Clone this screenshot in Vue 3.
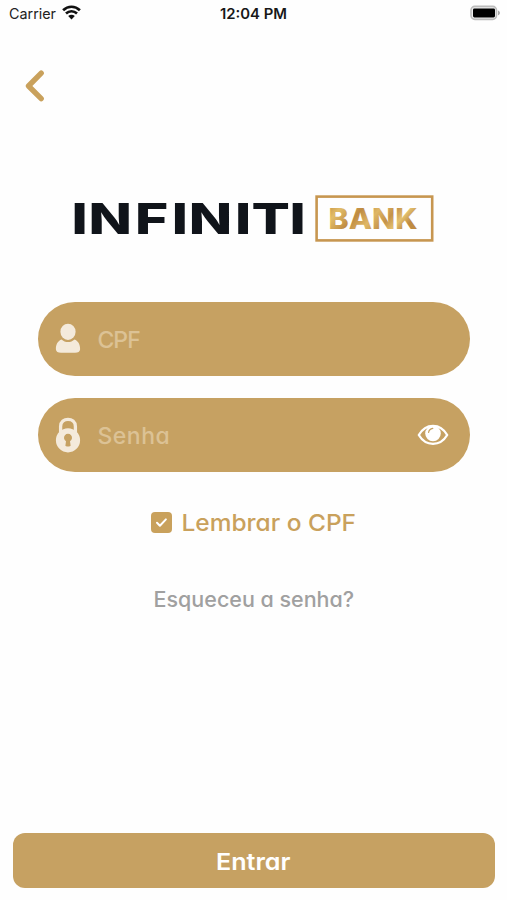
<script setup>
import { ref } from 'vue'

const cpf = ref('')
const password = ref('')
const showPassword = ref(false)
const remember = ref(true)
</script>

<template>
  <main class="screen">
    <header class="status">
      <div class="carrier">
        <svg class="carrier-name" width="48" height="20" viewBox="0 0 48 20"><text x="0" y="14.2" textLength="47" lengthAdjust="spacingAndGlyphs">Carrier</text></svg>
        <svg class="wifi" width="19" height="15" viewBox="0 0 19 15">
          <path d="M1.1 5.2C6 .6 13 .6 17.9 5.2M4 8.4c3.2-2.9 7.8-2.9 11 0" />
          <path class="wifi-dot" d="M6.2 10.9c2-1.7 4.6-1.7 6.6 0L9.5 14.4z" />
        </svg>
      </div>
      <svg class="time" width="68" height="20" viewBox="0 0 68 20"><text x="0" y="14.2" textLength="67" lengthAdjust="spacingAndGlyphs">12:04 PM</text></svg>
      <svg class="battery" width="32" height="16" viewBox="0 0 32 16">
        <rect x="2" y="1.4" width="25.5" height="13" rx="3.8" fill="#eee" stroke="#bcbcbc" stroke-width="1.6" />
        <rect x="4" y="3.4" width="22" height="9" rx="1.4" fill="#000" />
        <path d="M29 5.4c2.6.8 2.6 4 0 4.8z" fill="#aaa" />
      </svg>
    </header>

    <button class="back" aria-label="Voltar">
      <svg width="20" height="32" viewBox="0 0 20 32"><path d="M16.2 3.2 3.5 16l12.7 12.7" /></svg>
    </button>

    <div class="logo">
      <svg class="wordmark" width="232" height="48" viewBox="0 0 232 48">
        <text transform="scale(1.33 1)" x="-1.2 11.6 46.6 74.2 87.1 121.9 134.2 162.8" y="39.1">INFINITI</text>
      </svg>
      <svg class="bank" width="119" height="48" viewBox="0 0 119 48">
        <defs>
          <linearGradient id="gold" x1="0" y1="0" x2="1" y2=".35">
            <stop offset="0" stop-color="#c08a3e" />
            <stop offset=".18" stop-color="#e2bd69" />
            <stop offset=".4" stop-color="#bf8b42" />
            <stop offset=".58" stop-color="#dfb765" />
            <stop offset=".75" stop-color="#c4924a" />
            <stop offset=".88" stop-color="#e4c170" />
            <stop offset="1" stop-color="#bf8b42" />
          </linearGradient>
        </defs>
        <rect x="1.6" y="1.6" width="115.6" height="43.8" fill="none" stroke="#c79650" stroke-width="2.6" />
        <text x="13.5" y="34.4" textLength="89" lengthAdjust="spacingAndGlyphs" fill="url(#gold)">BANK</text>
      </svg>
    </div>

    <form class="form" @submit.prevent>
      <label class="field">
        <svg class="icon" width="26" height="38" viewBox="0 0 26 38">
          <ellipse cx="13" cy="11.8" rx="7.6" ry="8.1" />
          <path d="M6.5 19.5c3.5 3.4 9.5 3.4 13 0 3.6 1.2 5.8 5.2 5.6 9.8 0 2.5-2.2 3.4-5 3.4H6c-2.9 0-5.1-.9-5.1-3.4-.2-4.6 2-8.6 5.6-9.8z" />
        </svg>
        <input v-model="cpf" class="cpf" placeholder="CPF" />
      </label>
      <label class="field">
        <svg class="icon" width="26" height="38" viewBox="0 0 26 38">
          <path d="M5.6 17v-6.5c0-9.6 14.8-9.6 14.8 0V17" fill="none" stroke="#f4eadb" stroke-width="3.3" />
          <path fill-rule="evenodd" d="M13 12.2a12.1 12.1 0 1 0 0 24.2 12.1 12.1 0 0 0 0-24.2zM11 25.3a4 4 0 1 1 4 0l.6 4.3c.2 1.3-5.4 1.3-5.2 0z" />
        </svg>
        <input v-model="password" class="senha" :type="showPassword ? 'text' : 'password'" placeholder="Senha" />
        <button type="button" class="eye" aria-label="Mostrar senha" @click="showPassword = !showPassword">
          <svg width="32" height="22" viewBox="0 0 32 22">
            <path d="M1.8 11C8.8-1.2 23.2-1.2 30.2 11 23.2 22.8 8.8 22.8 1.8 11z" fill="none" stroke="#fff" stroke-width="2.3" stroke-linejoin="round" />
            <circle cx="16" cy="9.4" r="7.8" fill="#fff" />
            <path d="M11.6 8.3c.3-2.1 1.8-3.6 4.2-4" fill="none" stroke="#c6a162" stroke-width="1.2" stroke-linecap="round" />
          </svg>
        </button>
      </label>

      <label class="remember">
        <input v-model="remember" type="checkbox" />
        <span class="box">
          <svg v-if="remember" width="21" height="21" viewBox="0 0 21 21"><path d="m6 10.8 2.9 2.9 6-6.3" /></svg>
        </span>
        <svg class="remember-text" width="175" height="30" viewBox="0 0 175 30"><text x="-.5" y="24" textLength="174.5" lengthAdjust="spacingAndGlyphs">Lembrar o CPF</text></svg>
      </label>
      <a class="forgot">
        <svg width="202" height="30" viewBox="0 0 202 30"><text x=".6" y="23.1" textLength="200.5" lengthAdjust="spacingAndGlyphs">Esqueceu a senha?</text></svg>
      </a>
    </form>

    <button class="enter">
      <svg width="76" height="30" viewBox="0 0 76 30"><text x="0" y="23.6" textLength="74.5" lengthAdjust="spacingAndGlyphs">Entrar</text></svg>
    </button>
  </main>
</template>

<style>
body { background: #fefefe; }
</style>

<style scoped>
.screen {
  box-sizing: border-box;
  width: 507px;
  height: 900px;
  display: flex;
  flex-direction: column;
  background: #fefefe;
  font-family: Inter, sans-serif;
  overflow: hidden;
}
svg { display: block; flex: none; overflow: visible; }
button { padding: 0; border: 0; background: none; font-family: inherit; }
.status {
  height: 28px;
  display: grid;
  grid-template-columns: 1fr 68px 1fr;
  align-items: start;
  padding: 0 6px 0 9px;
  box-sizing: border-box;
}
.carrier { display: flex; gap: 5px; padding-top: 5px; }
.carrier-name { font-size: 14.5px; fill: #222; }
.wifi { fill: none; stroke: #111; stroke-width: 2.7; }
.wifi-dot { fill: #111; stroke: none; }
.time { margin: 5px 0 0 -1px; font-size: 14.5px; font-weight: 600; fill: #181818; }
.battery { justify-self: end; margin-top: 5px; }
.back { width: 20px; height: 32px; margin: 42px 0 0 25px; }
.back path { fill: none; stroke: #c9a15c; stroke-width: 5.4; stroke-linecap: round; stroke-linejoin: round; }
.logo { display: flex; gap: 10px; margin: 93px 0 0 73px; }
.wordmark { font-size: 42.7px; font-weight: 800; fill: #10141a; }
.bank { font-size: 29px; font-weight: 800; }
.form { display: flex; flex-direction: column; align-items: center; padding-top: 59px; }
.field {
  box-sizing: border-box;
  width: 432px;
  height: 74px;
  display: flex;
  align-items: center;
  padding: 0 21px 0 17px;
  border-radius: 37px;
  background: #c6a162;
}
.field + .field { margin-top: 22px; }
.icon { fill: #f4eadb; }
input:not([type='checkbox']) {
  flex: 1;
  min-width: 0;
  height: 40px;
  margin-left: 17px;
  padding: 2px 0 0;
  box-sizing: border-box;
  border: 0;
  outline: 0;
  background: none;
  color: #fff;
  font: 500 23px Inter, sans-serif;
  font-feature-settings: 'cv11';
}
input::placeholder { color: #dcc295; opacity: 1; }
.cpf { letter-spacing: -1px; }
.senha { letter-spacing: .5px; }
.remember { display: flex; align-items: center; gap: 10px; margin-top: 35px; }
.remember > input { position: absolute; opacity: 0; pointer-events: none; }
.box { width: 21px; height: 21px; border-radius: 4px; background: #c9a15c; }
.box path { fill: none; stroke: #fff; stroke-width: 2; stroke-linecap: round; stroke-linejoin: round; }
.remember-text { font-size: 23.5px; font-weight: 500; font-feature-settings: 'cv11'; fill: #c9a15c; }
.forgot { margin-top: 47px; font-size: 21px; font-weight: 500; font-feature-settings: 'cv11'; fill: #a0a0a0; }
.enter {
  width: 482px;
  height: 55px;
  margin: auto 0 12px 13px;
  display: flex;
  align-items: center;
  justify-content: center;
  border-radius: 12px;
  background: #c6a162;
  font-size: 23px;
  font-weight: 600;
  font-feature-settings: 'cv11';
  fill: #fff;
}
</style>
